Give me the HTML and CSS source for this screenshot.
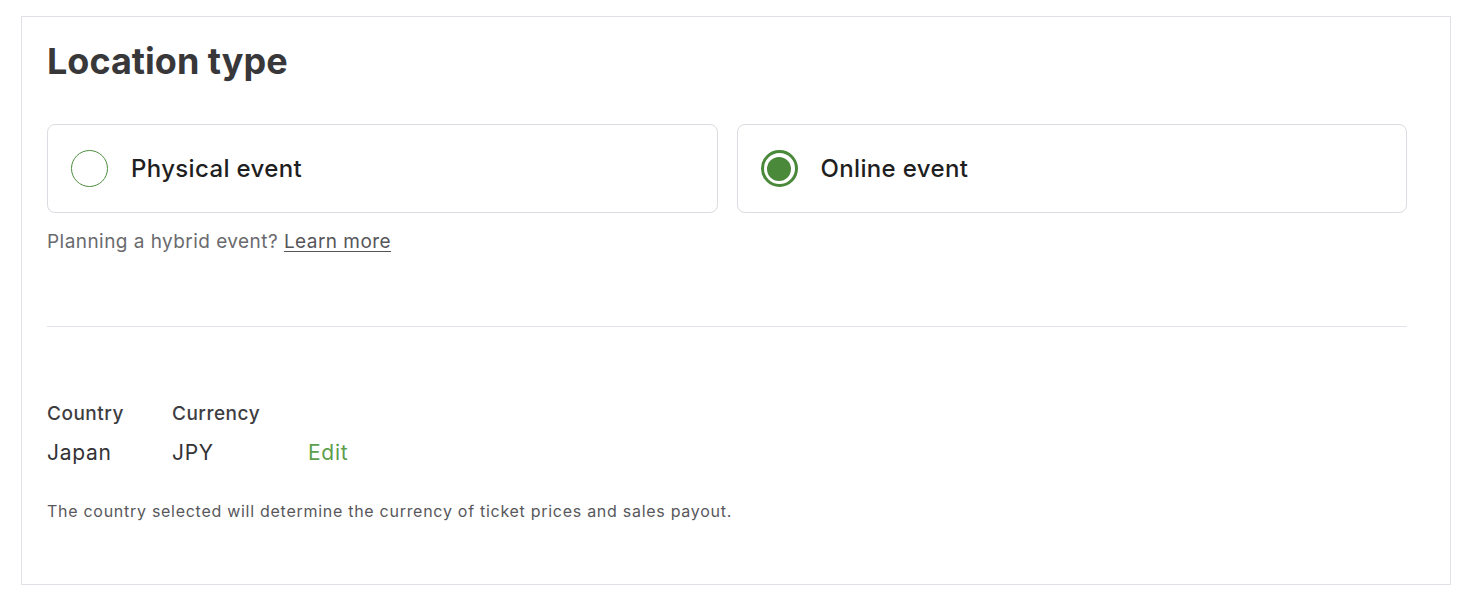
FILE: index.html
```html
<!DOCTYPE html>
<html lang="en">
<head>
<meta charset="utf-8">
<title>Location type</title>
<link rel="stylesheet" href="styles.css">
</head>
<body>
<section class="panel">
  <h2 class="title">Location type</h2>
  <div class="options">
    <label class="option">
      <span class="radio"></span>
      <span class="option-label">Physical event</span>
    </label>
    <label class="option">
      <span class="radio radio-checked"><span class="dot"></span></span>
      <span class="option-label">Online event</span>
    </label>
  </div>
  <p class="hint">Planning a hybrid event? <a class="hint-link" href="#">Learn more</a></p>
  <hr class="divider">
  <div class="locale">
    <div class="locale-col col-country">
      <div class="locale-label">Country</div>
      <div class="locale-value">Japan</div>
    </div>
    <div class="locale-col col-currency">
      <div class="locale-label">Currency</div>
      <div class="locale-value">JPY</div>
    </div>
    <div class="locale-col">
      <div class="locale-label">&nbsp;</div>
      <a class="edit" href="#">Edit</a>
    </div>
  </div>
  <p class="note">The country selected will determine the currency of ticket prices and sales payout.</p>
</section>
</body>
</html>
```
FILE: styles.css
```css
* { box-sizing: border-box; }
html, body { margin: 0; padding: 0; background: #ffffff; }
body {
  font-family: Inter, "Noto Sans", "Liberation Sans", sans-serif;
  padding: 16px 0 0 21px;
}
.panel {
  width: 1430px;
  height: 569px;
  border: 1.5px solid #e1e0e6;
  padding: 0 43px 0 25px;
}
.title {
  margin: 22px 0 0;
  font-size: 36px;
  line-height: 44px;
  font-weight: 700;
  color: #38383a;
  letter-spacing: 0;
}
.options {
  display: flex;
  gap: 19px;
  margin-top: 41px;
}
.option {
  flex: 1;
  height: 89px;
  border: 1.5px solid #dcdbe2;
  border-radius: 8px;
  display: flex;
  align-items: center;
  padding-left: 23px;
}
.radio {
  width: 37px;
  height: 37px;
  border-radius: 50%;
  border: 1.6px solid #4e8e40;
  display: flex;
  align-items: center;
  justify-content: center;
  flex: none;
}
.radio-checked { border: 3px solid #4a883a; }
.dot {
  width: 24px;
  height: 24px;
  border-radius: 50%;
  background: #4a883a;
}
.option-label {
  margin-left: 23px;
  font-size: 24px;
  letter-spacing: 0.35px;
  font-weight: 500;
  color: #1f1f22;
}
.hint {
  margin: 17px 0 0;
  font-size: 19px;
  letter-spacing: 0.45px;
  line-height: 24px;
  color: #6a6a6e;
}
.hint-link { color: #55555a; text-decoration: underline; text-underline-offset: 3px; }
.divider {
  margin: 72px 0 0;
  border: 0;
  border-top: 1px solid #e3e2e8;
}
.locale {
  display: flex;
  margin-top: 75px;
}
.locale-col { display: flex; flex-direction: column; gap: 13px; }
.col-country { width: 125px; }
.col-currency { width: 136px; }
.locale-label {
  font-size: 19px;
  letter-spacing: 0.5px;
  line-height: 24px;
  font-weight: 500;
  color: #3d3d42;
}
.locale-value {
  font-size: 21px;
  letter-spacing: 0.7px;
  line-height: 27px;
  color: #333336;
}
.edit {
  font-size: 21px;
  letter-spacing: 0.7px;
  line-height: 27px;
  color: #5b9e4b;
  text-decoration: none;
}
.note {
  margin: 35px 0 0;
  font-size: 16px;
  letter-spacing: 0.72px;
  line-height: 20px;
  color: #58585c;
}
```
